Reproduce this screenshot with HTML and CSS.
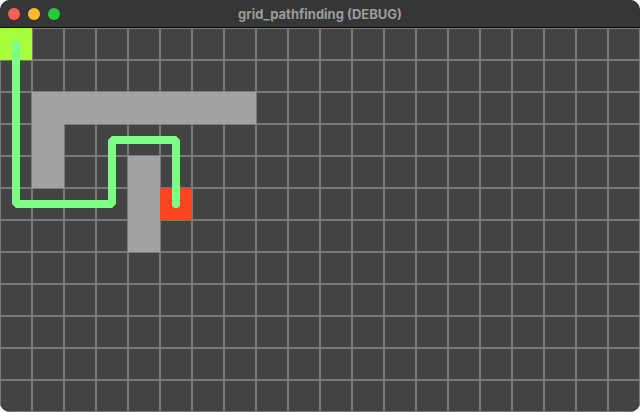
FILE: index.html
```html
<!DOCTYPE html>
<html>
<head>
<meta charset="utf-8">
<title>grid_pathfinding (DEBUG)</title>
<link rel="stylesheet" href="styles.css">
</head>
<body>
<div class="window">
  <div class="titlebar">
    <div class="lights">
      <span class="light red"></span>
      <span class="light yellow"></span>
      <span class="light green"></span>
    </div>
    <div class="title">grid_pathfinding (DEBUG)</div>
  </div>
  <div class="canvas">
    <div class="cell start"></div>
    <div class="cell goal"></div>
    <div class="cell wall wall-top"></div>
    <div class="cell wall wall-left"></div>
    <div class="cell wall wall-mid"></div>
    <svg class="path" width="640" height="384" viewBox="0 0 640 384">
      <polyline points="16,16 16,176 112,176 112,112 176,112 176,176" fill="none" stroke="#7cff86" stroke-width="8" stroke-linejoin="bevel" stroke-linecap="round"/>
    </svg>
  </div>
</div>
</body>
</html>
```
FILE: styles.css
```css
html, body {
  margin: 0;
  padding: 0;
  background: #ffffff;
}
.window {
  width: 640px;
  height: 412px;
  border-radius: 10px;
  overflow: hidden;
  display: flex;
  flex-direction: column;
  background: #434343;
}
.titlebar {
  height: 27px;
  border-bottom: 1px solid #0c0c0c;
  background: #363636;
  display: flex;
  align-items: center;
  position: relative;
  flex: none;
}
.lights {
  display: flex;
  gap: 8px;
  padding-left: 8px;
  padding-top: 1px;
}
.light {
  width: 12px;
  height: 12px;
  border-radius: 50%;
  display: block;
}
.light.red { background: #ff5f57; }
.light.yellow { background: #febc2e; }
.light.green { background: #28c840; }
.title {
  position: absolute;
  left: 0;
  right: 0;
  top: 0;
  height: 28px;
  line-height: 28px;
  text-align: center;
  font-family: Inter, "Liberation Sans", sans-serif;
  font-weight: 700;
  font-size: 13px;
  color: #9c9c9c;
}
.canvas {
  position: relative;
  height: 384px;
  display: grid;
  grid-template-columns: repeat(20, 32px);
  grid-template-rows: repeat(12, 32px);
  background-color: #434343;
  background-image:
    linear-gradient(to right, #787878 0 1px, transparent 1px 31px, #787878 31px 32px),
    linear-gradient(to bottom, #787878 0 1px, transparent 1px 31px, #787878 31px 32px);
  background-size: 32px 32px;
  background-position: 0 0;
}
.cell {
  position: relative;
}
.start {
  grid-column: 1;
  grid-row: 1;
  background: #a6ff3a;
}
.goal {
  grid-column: 6;
  grid-row: 6;
  background: #ff4422;
}
.wall {
  background: #a2a2a2;
}
.wall-top {
  grid-column: 2 / 9;
  grid-row: 3;
}
.wall-left {
  grid-column: 2;
  grid-row: 3 / 6;
}
.wall-mid {
  grid-column: 5;
  grid-row: 5 / 8;
}
.path {
  position: absolute;
  left: 0;
  top: 0;
}
```
